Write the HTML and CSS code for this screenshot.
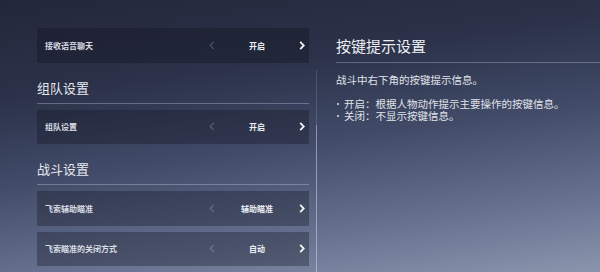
FILE: index.html
```html
<!DOCTYPE html>
<html lang="zh-CN">
<head>
  <meta charset="UTF-8">
  <meta name="viewport" content="width=device-width, initial-scale=1.0">
  <link rel="stylesheet" href="styles.css">
  <title>按键提示设置</title>
</head>
<body>
  <div class="page">
    <div class="list">
      <div class="row">
        <span class="label">接收语音聊天</span>
        <svg class="prev" viewBox="0 0 6 10"><polyline points="5,1 1,5 5,9"/></svg>
        <span class="value">开启</span>
        <svg class="next" viewBox="0 0 6 10"><polyline points="1,1 5,5 1,9"/></svg>
      </div>

      <h3 class="section">组队设置</h3>
      <div class="row">
        <span class="label">组队设置</span>
        <svg class="prev" viewBox="0 0 6 10"><polyline points="5,1 1,5 5,9"/></svg>
        <span class="value">开启</span>
        <svg class="next" viewBox="0 0 6 10"><polyline points="1,1 5,5 1,9"/></svg>
      </div>

      <h3 class="section">战斗设置</h3>
      <div class="row">
        <span class="label">飞索辅助瞄准</span>
        <svg class="prev" viewBox="0 0 6 10"><polyline points="5,1 1,5 5,9"/></svg>
        <span class="value">辅助瞄准</span>
        <svg class="next" viewBox="0 0 6 10"><polyline points="1,1 5,5 1,9"/></svg>
      </div>
      <div class="row">
        <span class="label">飞索瞄准的关闭方式</span>
        <svg class="prev" viewBox="0 0 6 10"><polyline points="5,1 1,5 5,9"/></svg>
        <span class="value">自动</span>
        <svg class="next" viewBox="0 0 6 10"><polyline points="1,1 5,5 1,9"/></svg>
      </div>
    </div>

    <div class="scrollbar"><div class="thumb"></div></div>

    <div class="detail">
      <h2 class="title">按键提示设置</h2>
      <p class="desc">战斗中右下角的按键提示信息。</p>
      <p class="desc blank"></p>
      <p class="desc bullet">开启：根据人物动作提示主要操作的按键信息。</p>
      <p class="desc bullet">关闭：不显示按键信息。</p>
    </div>
  </div>
</body>
</html>
```

FILE: styles.css
```css
* {
  margin: 0;
  padding: 0;
  box-sizing: border-box
}

body {
  width: 600px;
  height: 272px;
  overflow: hidden;
  font-family: "Noto Sans CJK SC", "Noto Sans", sans-serif;
  color: #e4e6ec;
  background: linear-gradient(172deg, #23273a 0%, #2b3249 28%, #414b68 52%, #65718f 78%, #8a95ad 100%);
}

.page {
  display: flex;
  height: 272px;
}

.list {
  width: 272px;
  margin-left: 37px;
  padding-top: 28px;
  display: flex;
  flex-direction: column;
}

.row {
  height: 35px;
  display: grid;
  grid-template-columns: 1fr 14px 76px 14px;
  align-items: center;
  padding-left: 8px;
  background: rgba(14, 17, 28, 0.32);
  margin-bottom: 6px;
}

.label {
  font-size: 8px;
  font-weight: bold;
  color: #d9dce4;
}

.value {
  font-size: 8px;
  font-weight: bold;
  color: #eceef2;
  text-align: center;
}

.prev, .next {
  width: 6px;
  height: 9px;
  justify-self: center;
  fill: none;
}

.prev {
  stroke: rgba(255, 255, 255, 0.22);
  stroke-width: 1.3;
}

.next {
  stroke: #f2f3f6;
  stroke-width: 2;
}

.section {
  font-size: 13px;
  font-weight: normal;
  line-height: 13px;
  color: #e6e8ee;
  padding-top: 12px;
  padding-bottom: 9px;
  border-bottom: 1px solid rgba(200, 210, 230, 0.35);
  margin-bottom: 6px;
}

.scrollbar {
  width: 1px;
  margin-left: 7px;
  margin-top: 70px;
  background: rgba(200, 208, 225, 0.18);
  display: flex;
  flex-direction: column;
}

.thumb {
  margin-top: 55px;
  flex: 1;
  background: rgba(210, 216, 230, 0.45);
}

.detail {
  flex: 1;
  margin-left: 19px;
  padding-top: 36px;
}

.title {
  font-size: 15px;
  font-weight: normal;
  line-height: 20px;
  color: #eceef3;
  padding-bottom: 6px;
  border-bottom: 1px solid rgba(220, 225, 235, 0.3);
  margin-bottom: 11px;
}

.desc {
  font-family: "Liberation Sans", "Noto Sans CJK SC", sans-serif;
  font-size: 10.5px;
  line-height: 12px;
  height: 12px;
  color: #e0e3ea;
  white-space: nowrap;
}

.bullet {
  position: relative;
  padding-left: 8px;
}

.bullet::before {
  content: "";
  position: absolute;
  left: 1px;
  top: 5px;
  width: 2px;
  height: 2px;
  border-radius: 1px;
  background: #e0e3ea;
}
```
